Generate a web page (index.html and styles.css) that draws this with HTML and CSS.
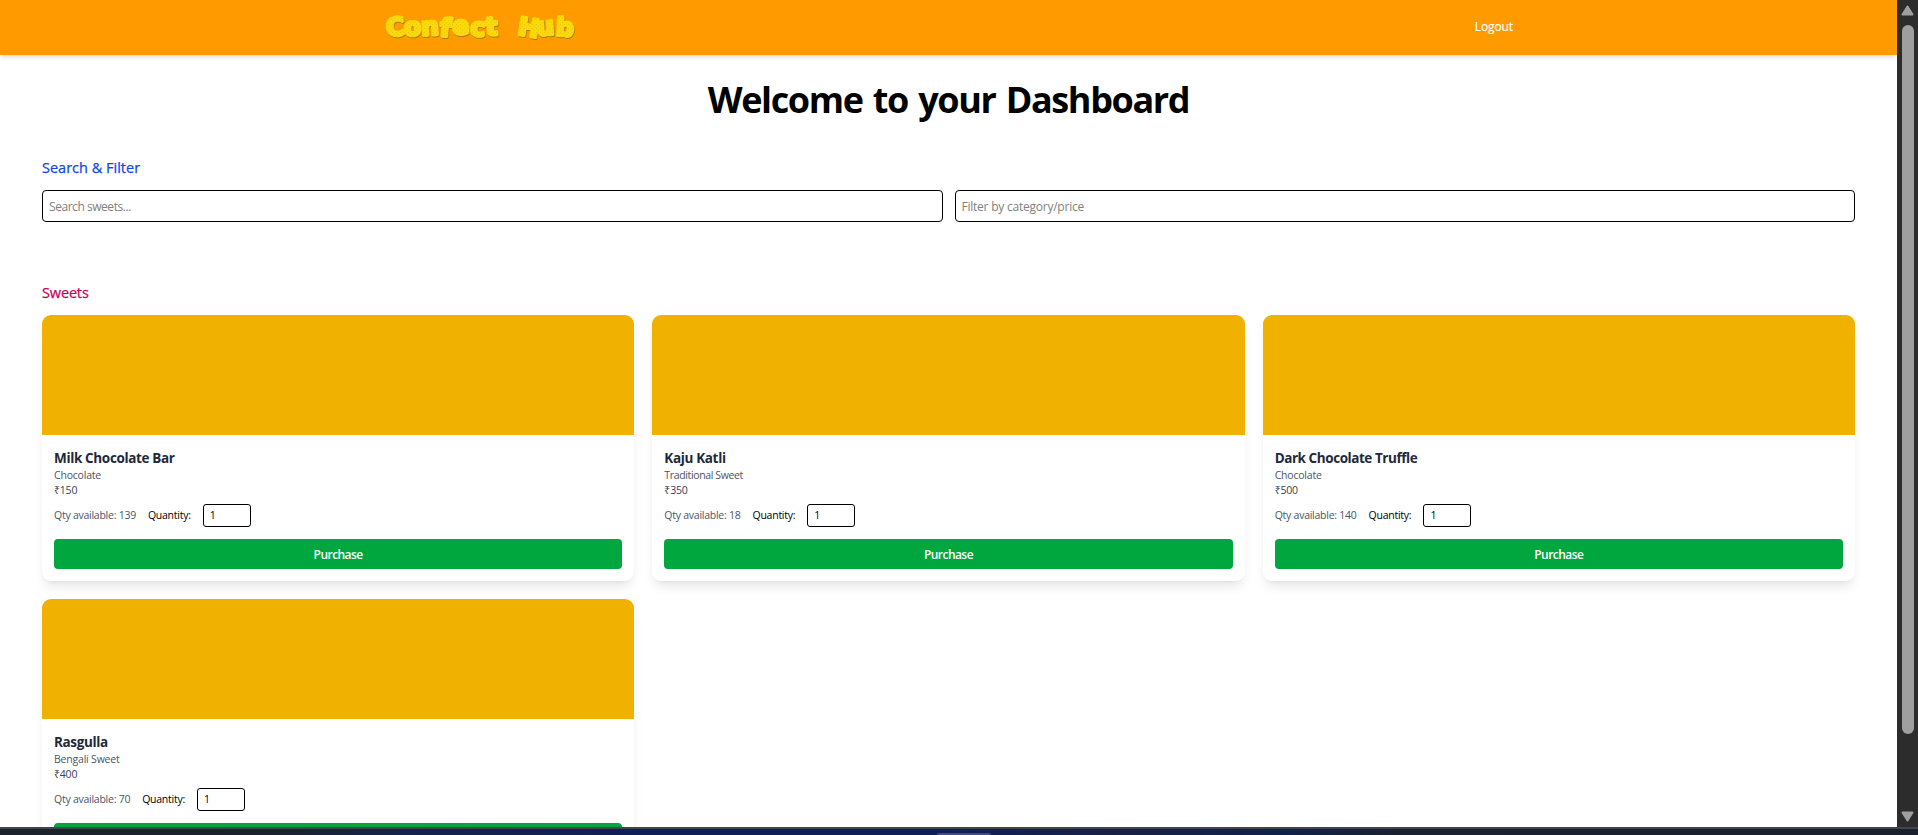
FILE: index.html
```html
<!DOCTYPE html>
<html lang="en">
<head>
<meta charset="utf-8">
<title>Confect Hub</title>
<link rel="stylesheet" href="styles.css">
</head>
<body>
<div class="window">
  <div class="viewport">
    <div class="page">
      <header class="navbar">
        <svg class="logo" width="196" height="32" viewBox="0 0 196 32" role="img" aria-label="Confect Hub">
          <defs>
            <pattern id="speckle" width="4" height="4" patternUnits="userSpaceOnUse">
              <rect width="4" height="4" fill="#fadb00"/>
              <rect width="1" height="1" fill="#f2c414"/>
              <rect x="2" y="2" width="1" height="1" fill="#f5cc0c"/>
            </pattern>
          </defs>
          <g class="logo-shade" transform="translate(.6 1)"><text y="24.5 24 23.5 24 23 23.5 23.5 24 22.5 23.5 23.5" x="3 20.5 37.5 55.5 69 86 102 113 133 153 171.5" rotate="-6 -4 -3 5 -6 3 -3 4 9 -4 3">Confect Hub</text></g>
          <text class="logo-face" aria-hidden="true" y="24.5 24 23.5 24 23 23.5 23.5 24 22.5 23.5 23.5" x="3 20.5 37.5 55.5 69 86 102 113 133 153 171.5" rotate="-6 -4 -3 5 -6 3 -3 4 9 -4 3">Confect Hub</text>
        </svg>
        <a class="logout">Logout</a>
      </header>
      <main class="content">
        <h1 class="welcome"><span>Welcome to your Dashboard</span></h1>
        <section class="search">
          <h2 class="section-title blue">Search &amp; Filter</h2>
          <div class="fields">
            <input class="field search-field" placeholder="Search sweets...">
            <input class="field filter-field" placeholder="Filter by category/price">
          </div>
        </section>
        <section>
          <h2 class="section-title pink">Sweets</h2>
          <div class="cards">
            <article class="card">
              <div class="photo"></div>
              <div class="details">
                <h3 class="name">Milk Chocolate Bar</h3>
                <p class="kind">Chocolate</p>
                <p class="price">₹150</p>
                <div class="order"><span class="stock">Qty available: 139</span><label class="label">Quantity:</label><input class="qty" value="1"></div>
                <button class="buy">Purchase</button>
              </div>
            </article>
            <article class="card">
              <div class="photo"></div>
              <div class="details">
                <h3 class="name">Kaju Katli</h3>
                <p class="kind long">Traditional Sweet</p>
                <p class="price">₹350</p>
                <div class="order"><span class="stock">Qty available: 18</span><label class="label">Quantity:</label><input class="qty" value="1"></div>
                <button class="buy">Purchase</button>
              </div>
            </article>
            <article class="card">
              <div class="photo"></div>
              <div class="details">
                <h3 class="name long">Dark Chocolate Truffle</h3>
                <p class="kind">Chocolate</p>
                <p class="price">₹500</p>
                <div class="order"><span class="stock">Qty available: 140</span><label class="label">Quantity:</label><input class="qty" value="1"></div>
                <button class="buy">Purchase</button>
              </div>
            </article>
            <article class="card">
              <div class="photo"></div>
              <div class="details">
                <h3 class="name">Rasgulla</h3>
                <p class="kind">Bengali Sweet</p>
                <p class="price">₹400</p>
                <div class="order"><span class="stock">Qty available: 70</span><label class="label">Quantity:</label><input class="qty" value="1"></div>
                <button class="buy" aria-label="Purchase"></button>
              </div>
            </article>
          </div>
        </section>
      </main>
    </div>
    <div class="scrollbar">
      <svg class="arrow" width="13" height="11" viewBox="0 0 13 11"><path d="M6.5 1.5 11.5 9.5H1.5Z"/></svg>
      <div class="thumb"></div>
      <svg class="arrow" width="13" height="11" viewBox="0 0 13 11"><path d="M1.5 1.5h10L6.5 9.5Z"/></svg>
    </div>
  </div>
  <div class="taskbar"><div class="handle"></div></div>
</div>
</body>
</html>
```

FILE: styles.css
```css
* { box-sizing: border-box; margin: 0; padding: 0; }
body { height: 835px; overflow: hidden; background: #fff; font-family: "Open Sans", "Noto Sans", sans-serif; color: #000; }
.window { height: 835px; display: flex; flex-direction: column; }
.viewport { height: 827px; display: flex; overflow: hidden; }
.page { width: 1897px; height: 827px; overflow: hidden; }

.navbar { height: 55px; padding: 0 384px; display: flex; align-items: center; justify-content: space-between; background: #ff9a00; box-shadow: 0 3px 5px -1px rgba(0,0,0,.13), 0 2px 3px -2px rgba(0,0,0,.1); }
.logo { overflow: visible; }
.logo text { font: 900 25px "DejaVu Sans", sans-serif; stroke-width: 3px; stroke-linejoin: round; }
.logo-shade text { fill: #a78100; stroke: #a78100; }
.logo .logo-face { fill: url(#speckle); stroke: url(#speckle); }
.logout { font-size: 12px; line-height: 18px; padding-bottom: 1px; color: #fff; letter-spacing: -.1px; -webkit-text-stroke: .15px #fff; }

.content { padding: 23px 42px; }
.welcome { height: 42px; line-height: 43px; font-size: 36px; font-weight: 700; text-align: center; letter-spacing: -1.37px; word-spacing: 2.2px; }
.search { margin-top: 37px; margin-bottom: 60px; }
.section-title { height: 21px; margin-bottom: 12px; font-size: 14.5px; line-height: 21px; font-weight: 400; -webkit-text-stroke: .25px currentColor; }
.blue { color: #1447e6; }
.pink { color: #c6005c; letter-spacing: -.15px; }
.fields { display: grid; grid-template-columns: 1fr 1fr; gap: 12px; }
.field { height: 32px; padding: 1px 6px 0; border: 1px solid #000; border-radius: 4px; background: #fff; font: 12px "Open Sans", sans-serif; outline: none; }
.search-field { letter-spacing: -.45px; }
.filter-field { letter-spacing: -.23px; }
.field::placeholder { color: #808080; }

.cards { display: grid; grid-template-columns: repeat(3, 1fr); gap: 18px; }
.card { height: 266px; overflow: hidden; border-radius: 9px; background: #fff; box-shadow: 0 8px 12px -3px rgba(0,0,0,.1), 0 3px 5px -4px rgba(0,0,0,.1); }
.photo { height: 120px; background: #f0b100; }
.details { padding: 13px 12px 12px; }
.name { height: 20px; line-height: 20px; font-size: 13.5px; font-weight: 700; color: #1e2939; letter-spacing: -.35px; }
.name.long { letter-spacing: -.44px; }
.kind, .price { height: 15px; line-height: 15px; font-size: 10.5px; color: #4a5565; letter-spacing: -.2px; }
.kind.long { letter-spacing: -.36px; }
.price { color: #364153; }
.order { margin-top: 6px; height: 23px; display: flex; align-items: center; gap: 12px; font-size: 10.5px; letter-spacing: -.25px; }
.order span, .order label { padding-bottom: 1px; }
.stock { color: #4a5565; }
.qty { width: 48px; height: 23px; padding: 0 6px 1px; border: 1px solid #000; border-radius: 3px; font: 10.5px "Open Sans", sans-serif; }
.buy { display: block; width: 100%; height: 30px; margin-top: 12px; border: 0; border-radius: 4px; background: #00a63e; color: #fff; font: 600 12px "Open Sans", sans-serif; letter-spacing: -.55px; }

.scrollbar { width: 21px; height: 827px; padding: 5px 0; display: flex; flex-direction: column; align-items: center; background: #2c2c2c; }
.arrow { fill: #9f9f9f; stroke: #9f9f9f; stroke-width: 2px; stroke-linejoin: round; }
.thumb { width: 12px; height: 709px; margin: 9px 0 77px; border-radius: 6px; background: #9f9f9f; }
.taskbar { height: 8px; border-top: 2px solid #42454c; display: flex; justify-content: center; align-items: flex-end; background: linear-gradient(90deg, #1b222b 0, #1b222f 280px, #14234a 400px, #101e58 650px, #101e58 950px, #182044 1120px, #10214a 1280px, #1a2130 1400px, #1a202d 100%); }
.handle { width: 54px; height: 2px; margin-left: 10px; border-radius: 2px 2px 0 0; background: #414b82; }
```
